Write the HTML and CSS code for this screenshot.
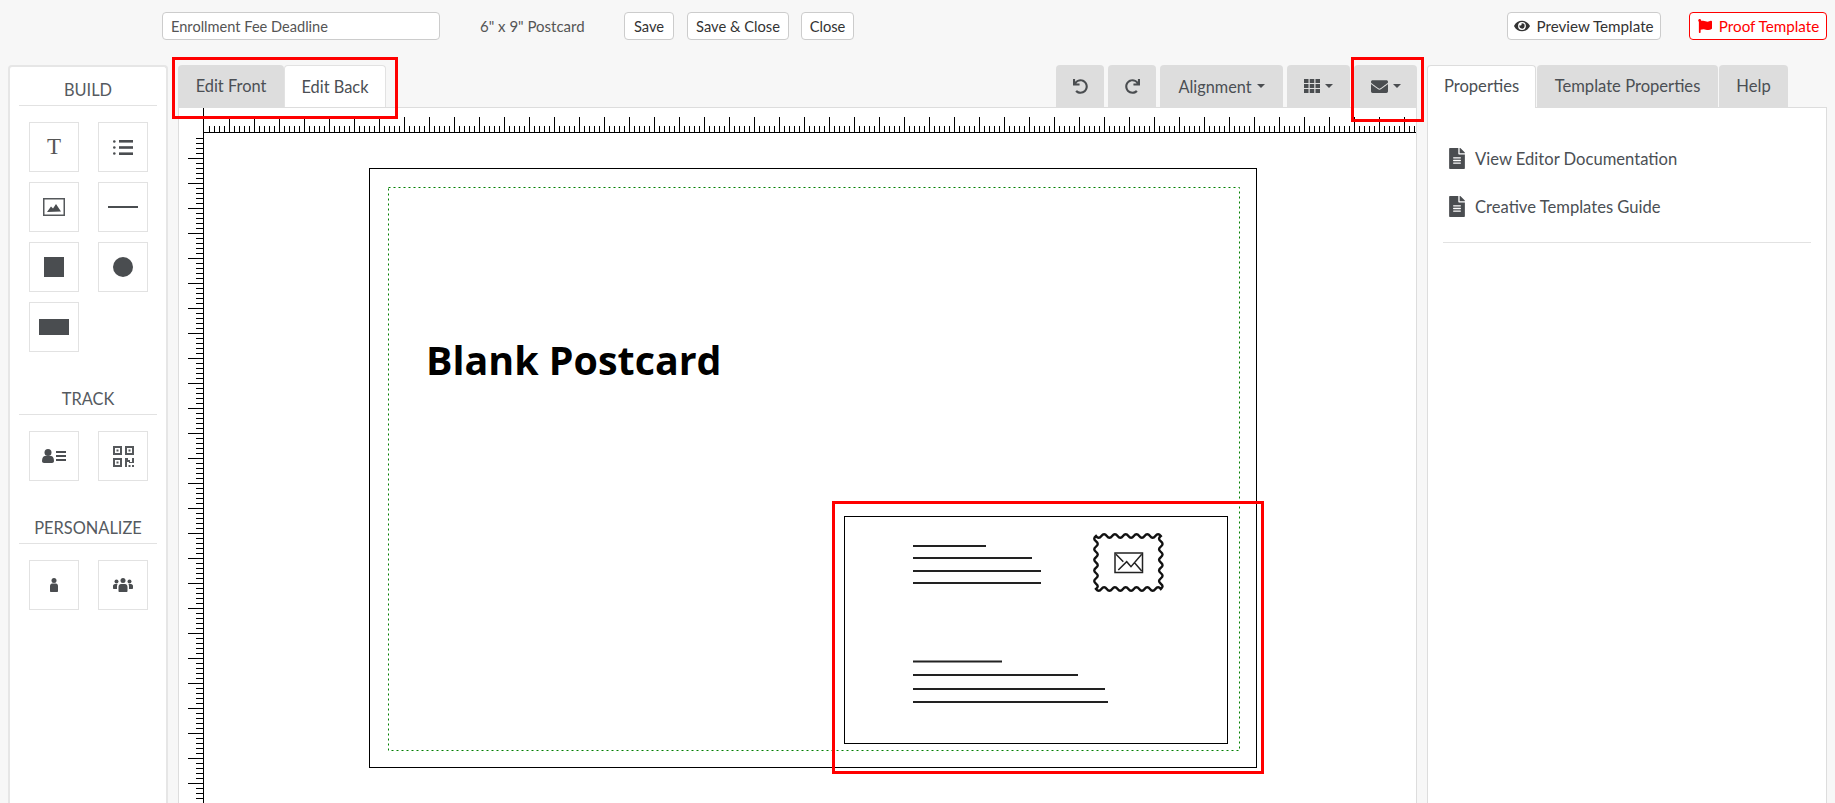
FILE: index.html
```html
<!DOCTYPE html>
<html lang="en">
<head>
    <meta charset="UTF-8">
    <title>Template Editor</title>
    <link rel="stylesheet" href="styles.css">
</head>
<body>
    <svg class="icon-defs" width="0" height="0">
        <symbol id="i-file" viewBox="0 0 384 512"><path d="M224 136V0H24C10.7 0 0 10.7 0 24v464c0 13.3 10.7 24 24 24h336c13.3 0 24-10.7 24-24V160H248c-13.2 0-24-10.8-24-24zm64 236c0 6.6-5.4 12-12 12H108c-6.6 0-12-5.4-12-12v-8c0-6.6 5.4-12 12-12h168c6.6 0 12 5.4 12 12v8zm0-64c0 6.6-5.4 12-12 12H108c-6.6 0-12-5.4-12-12v-8c0-6.6 5.4-12 12-12h168c6.6 0 12 5.4 12 12v8zm0-72v8c0 6.6-5.4 12-12 12H108c-6.6 0-12-5.4-12-12v-8c0-6.6 5.4-12 12-12h168c6.6 0 12 5.4 12 12zm96-114.1v6.1H256V0h6.1c6.4 0 12.5 2.5 17 7l97.9 98c4.5 4.5 7 10.6 7 16.9z"/></symbol>
        <symbol id="i-undo" viewBox="0 0 512 512"><path d="M212.333 224.333H12c-6.627 0-12-5.373-12-12V12C0 5.373 5.373 0 12 0h48c6.627 0 12 5.373 12 12v78.112C117.773 39.279 184.26 7.47 258.175 8.007c136.906.994 246.448 111.623 246.157 248.532C504.041 393.258 393.12 504 256.333 504c-64.089 0-122.496-24.313-166.51-64.215-5.099-4.622-5.334-12.554-.467-17.42l33.967-33.967c4.474-4.474 11.662-4.717 16.401-.525C170.76 415.336 211.58 432 256.333 432c97.268 0 176-78.716 176-176 0-97.267-78.716-176-176-176-58.496 0-110.28 28.476-142.274 72.333h98.274c6.627 0 12 5.373 12 12v48c0 6.627-5.373 12-12 12z"/></symbol>
    </svg>

    <header class="topbar">
        <input class="name-input" type="text" value="Enrollment Fee Deadline">
        <span class="format-label">6" x 9" Postcard</span>
        <a class="btn btn-save" href="#">Save</a>
        <a class="btn btn-save-close" href="#">Save &amp; Close</a>
        <a class="btn btn-close" href="#">Close</a>
        <a class="btn btn-preview" href="#">
            <svg class="btn-icon eye" viewBox="0 0 576 512"><path d="M572.52 241.4C518.29 135.59 410.93 64 288 64S57.68 135.64 3.48 241.41a32.35 32.35 0 0 0 0 29.19C57.71 376.41 165.07 448 288 448s230.32-71.64 284.52-177.41a32.35 32.35 0 0 0 0-29.19zM288 400a144 144 0 1 1 144-144 143.93 143.93 0 0 1-144 144zm0-240a95.31 95.31 0 0 0-25.31 3.79 47.85 47.85 0 0 1-66.9 66.9A95.78 95.78 0 1 0 288 160z"/></svg>
            Preview Template
        </a>
        <a class="btn btn-proof" href="#">
            <svg class="btn-icon flag" viewBox="0 0 512 512"><path d="M349.565 98.783C295.978 98.783 251.721 64 184.348 64c-24.955 0-47.309 4.384-68.045 12.013a55.947 55.947 0 0 0 3.586-23.562C118.117 24.015 94.806 1.206 66.338.048 34.345-1.254 8 24.296 8 56c0 19.026 9.497 35.825 24 45.945V488c0 13.255 10.745 24 24 24h16c13.255 0 24-10.745 24-24v-94.4c28.311-12.064 63.582-22.122 114.435-22.122 53.588 0 97.844 34.783 165.217 34.783 48.169 0 86.667-16.294 122.505-40.858C506.84 359.452 512 349.571 512 339.045v-243.1c0-23.393-24.269-38.87-45.485-29.016-34.338 15.948-76.454 31.854-116.95 31.854z"/></svg>
            Proof Template
        </a>
    </header>

    <main class="workspace">
        <aside class="tools">
            <h3>BUILD</h3>
            <div class="tool-grid">
                <div class="tool"><span class="tool-t">T</span></div>
                <div class="tool">
                    <svg width="20" height="15" viewBox="0 0 20 15"><circle cx="1.3" cy="1.5" r="1.3"/><circle cx="1.3" cy="7.5" r="1.3"/><circle cx="1.3" cy="13.5" r="1.3"/><rect x="6" y="0" width="14" height="2.6"/><rect x="6" y="6.2" width="14" height="2.6"/><rect x="6" y="12.4" width="14" height="2.6"/></svg>
                </div>
                <div class="tool">
                    <svg width="22" height="18" viewBox="0 0 22 18"><rect x="0.75" y="0.75" width="20.5" height="16.5" fill="none" stroke="#55585b" stroke-width="1.5"/><path d="M4 14 8 8.5l2 2 3-4.500 5 7.500z"/></svg>
                </div>
                <div class="tool"><span class="shape-line"></span></div>
                <div class="tool"><span class="shape-square"></span></div>
                <div class="tool"><span class="shape-circle"></span></div>
                <div class="tool"><span class="shape-rect"></span></div>
            </div>

            <h3>TRACK</h3>
            <div class="tool-grid">
                <div class="tool">
                    <svg width="24" height="14" viewBox="0 0 24 14"><circle cx="6" cy="3.500" r="3.500"/><path d="M0 12c0-3.500 1.500-5 3-5h6c1.500 0 3 1.500 3 5 0 1.200-.8 2-2 2H2c-1.200 0-2-.8-2-2z"/><rect x="14" y="2" width="10" height="2"/><rect x="14" y="6" width="10" height="2"/><rect x="14" y="10" width="10" height="2"/></svg>
                </div>
                <div class="tool">
                    <svg class="qr" width="21" height="21" viewBox="0 0 21 21"><path fill-rule="evenodd" d="M0 0h9v9H0zM2 2v5h5V2zM12 0h9v9h-9zM14 2v5h5V2zM0 12h9v9H0zM2 14v5h5v-5z"/><rect x="3.500" y="3.500" width="2" height="2"/><rect x="15.500" y="3.500" width="2" height="2"/><rect x="3.500" y="15.500" width="2" height="2"/><path d="M12 12h3v2h2v2h2v-4h2v5h-5v-1h-2v5h-2z"/><rect x="15.500" y="19" width="2" height="2"/><rect x="19" y="19" width="2" height="2"/></svg>
                </div>
            </div>

            <h3>PERSONALIZE</h3>
            <div class="tool-grid">
                <div class="tool">
                    <svg width="8" height="14" viewBox="0 0 8 14"><circle cx="4" cy="2.500" r="2.500"/><path d="M0 13v-5c0-1.500 1-2.500 2-2.500h4c1 0 2 1 2 2.500v5c0 .6-.4 1-1 1H1c-.6 0-1-.4-1-1z"/></svg>
                </div>
                <div class="tool">
                    <svg width="20" height="14" viewBox="0 0 20 14"><circle cx="10" cy="2.500" r="2.500"/><circle cx="3.500" cy="3.500" r="2"/><circle cx="16.500" cy="3.500" r="2"/><path d="M5.500 13v-4c0-1.800 1.200-3 2.500-3h4c1.300 0 2.500 1.200 2.500 3v4c0 .6-.4 1-1 1h-7c-.6 0-1-.4-1-1zM0 10V8c0-1 .8-2 2-2h2.500C4 7 4 8 4 9v2H1c-.6 0-1-.4-1-1zM20 10V8c0-1-.8-2-2-2h-2.500c.5 1 .5 2 .5 3v2h3c.6 0 1-.4 1-1z"/></svg>
                </div>
            </div>
        </aside>

        <section class="editor">
            <div class="editor-bar">
                <div class="side-tabs">
                    <a class="tab" href="#">Edit Front</a>
                    <a class="tab active" href="#">Edit Back</a>
                </div>
                <div class="actions">
                    <a class="action action-icon" href="#"><svg class="act-svg"><use href="#i-undo"/></svg></a>
                    <a class="action action-icon" href="#"><svg class="act-svg redo"><use href="#i-undo"/></svg></a>
                    <a class="action action-align" href="#">Alignment<span class="caret"></span></a>
                    <a class="action action-menu" href="#">
                        <svg width="16" height="14" viewBox="0 0 16 14"><rect width="4.500" height="4"/><rect x="5.750" width="4.500" height="4"/><rect x="11.500" width="4.500" height="4"/><rect y="5" width="4.500" height="4"/><rect x="5.750" y="5" width="4.500" height="4"/><rect x="11.500" y="5" width="4.500" height="4"/><rect y="10" width="4.500" height="4"/><rect x="5.750" y="10" width="4.500" height="4"/><rect x="11.500" y="10" width="4.500" height="4"/></svg><span class="caret"></span>
                    </a>
                    <a class="action action-menu" href="#">
                        <svg width="17" height="17" viewBox="0 0 512 512"><path d="M502.3 190.8c3.900-3.100 9.700-.2 9.700 4.700V400c0 26.500-21.500 48-48 48H48c-26.500 0-48-21.500-48-48V195.600c0-5 5.700-7.800 9.700-4.700 22.400 17.400 52.100 39.500 154.100 113.600 21.100 15.400 56.700 47.800 92.200 47.600 35.700.3 72-32.800 92.300-47.600 102-74.100 131.600-96.300 154-113.700zM256 320c23.200.4 56.600-29.200 73.400-41.400 132.700-96.300 142.800-104.700 173.400-128.700 5.800-4.500 9.200-11.500 9.200-18.900v-19c0-26.500-21.500-48-48-48H48C21.500 64 0 85.500 0 112v19c0 7.400 3.400 14.300 9.200 18.900 30.600 23.900 40.700 32.400 173.400 128.700 16.800 12.200 50.200 41.800 73.400 41.400z"/></svg><span class="caret"></span>
                    </a>
                </div>
            </div>

            <div class="canvas">
                <div class="ruler-top"></div>
                <div class="ruler-left"></div>
                <div class="postcard">
                    <svg class="postcard-art" width="888" height="600" viewBox="0 0 888 600">
                        <rect class="card-edge" x="0.500" y="0.500" width="887" height="599"/>
                        <rect class="safe-area" x="19.500" y="19.500" width="851" height="563"/>
                        <rect class="card-edge" x="475.500" y="348.500" width="383" height="227"/>
                        <g class="addr-lines">
                            <line x1="544" y1="378" x2="617" y2="378"/>
                            <line x1="544" y1="390" x2="663" y2="390"/>
                            <line x1="544" y1="403" x2="672" y2="403"/>
                            <line x1="544" y1="415" x2="672" y2="415"/>
                            <line x1="544" y1="493.500" x2="633" y2="493.500"/>
                            <line x1="544" y1="507" x2="709" y2="507"/>
                            <line x1="544" y1="521" x2="736" y2="521"/>
                            <line x1="544" y1="534" x2="739" y2="534"/>
                        </g>
                        <path class="stamp" d="M727 368q2.700 3.500 5.400 0t5.400 0t5.400 0t5.400 0t5.400 0t5.400 0t5.400 0t5.400 0t5.400 0t5.400 0t5.400 0t5.400 0q-3.500 2.650 0 5.300t0 5.300t0 5.300t0 5.300t0 5.300t0 5.300t0 5.300t0 5.300t0 5.300t0 5.300q-2.700-3.500-5.400 0t-5.400 0t-5.400 0t-5.400 0t-5.400 0t-5.400 0t-5.400 0t-5.400 0t-5.400 0t-5.400 0t-5.400 0t-5.400 0q3.500-2.650 0-5.300t0-5.300t0-5.300t0-5.300t0-5.300t0-5.300t0-5.300t0-5.300t0-5.300t0-5.300z"/>
                        <g class="stamp-mail">
                            <rect x="746" y="385" width="27.500" height="19.500"/>
                            <path d="M747 386.300 754.300 393.700M749.300 402 757.700 393.700 762 398.700 772.700 386.300M766 395.300 772.700 403"/>
                        </g>
                    </svg>
                    <h1 class="card-title">Blank Postcard</h1>
                </div>
            </div>
        </section>

        <aside class="props">
            <div class="props-tabs">
                <a class="prop-tab active" href="#">Properties</a>
                <a class="prop-tab wide" href="#">Template Properties</a>
                <a class="prop-tab help" href="#">Help</a>
            </div>
            <div class="props-body">
                <a class="doc-link" href="#"><svg class="doc-icon"><use href="#i-file"/></svg>View Editor Documentation</a>
                <a class="doc-link" href="#"><svg class="doc-icon"><use href="#i-file"/></svg>Creative Templates Guide</a>
                <hr class="props-rule">
            </div>
        </aside>
    </main>

    <!-- annotation boxes -->
    <div class="mark mark-tabs"></div>
    <div class="mark mark-mail"></div>
    <div class="mark mark-address"></div>
</body>
</html>
```

FILE: styles.css
```css
* {
    box-sizing: border-box;
}

html, body {
    margin: 0;
    height: 100%;
    overflow: hidden;
}

body {
    display: flex;
    flex-direction: column;
    position: relative;
    background: #f7f7f7;
    color: #4b4f54;
    font-family: 'Lato', sans-serif;
    font-size: 14px;
}

a {
    text-decoration: none;
    color: inherit;
}

.icon-defs {
    position: absolute;
}

/* Top bar */
.topbar {
    flex: none;
    display: flex;
    align-items: flex-start;
    height: 65px;
    padding: 12px 8px 0 162px;
}

.name-input {
    width: 278px;
    height: 28px;
    padding: 0 8px;
    border: 1px solid #ccc;
    border-radius: 4px;
    background: #fff;
    color: #555;
    font-family: inherit;
    font-size: 14.600px;
}

.format-label {
    margin-left: 40px;
    line-height: 28px;
    font-size: 15px;
    width: 144px;
    color: #555;
}

.btn {
    display: flex;
    align-items: center;
    justify-content: center;
    height: 28px;
    border: 1px solid #ccc;
    border-radius: 4px;
    background: #fff;
    color: #333;
    font-size: 14.700px;
}

.btn-save { width: 50px; }
.btn-save-close { width: 102px; margin-left: 13px; }
.btn-close { width: 53px; margin-left: 12px; }

.btn-preview {
    width: 154px;
    margin-left: auto;
    font-size: 15.200px;
}

.btn-proof {
    width: 138px;
    margin-left: 28px;
    border-color: #f00;
    color: #f00;
    font-size: 15.200px;
}

.btn-icon {
    width: 16px;
    height: 14px;
    margin-right: 6px;
    fill: currentColor;
}

.workspace {
    flex: 1;
    display: flex;
    min-height: 0;
}

/* Left tool panel */
.tools {
    flex: none;
    width: 160px;
    margin-left: 8px;
    padding: 12px 9px 0;
    border: 2px solid #e6e6e6;
    border-bottom: 0;
    border-radius: 4px 4px 0 0;
    background: #fff;
}

.tools h3 {
    margin: 36px 0 0;
    padding-bottom: 4px;
    border-bottom: 1px solid #e2e2e2;
    font-size: 16.400px;
    font-weight: 400;
    line-height: 22px;
    text-align: center;
    color: #555a60;
}

.tools h3:first-child {
    margin-top: 0;
}

.tool-grid {
    display: grid;
    grid-template-columns: 50px 50px;
    gap: 10px 19px;
    margin: 16px 0 0 10px;
}

.tool {
    display: flex;
    align-items: center;
    justify-content: center;
    height: 50px;
    border: 1px solid #e2e2e2;
    fill: #4a4d50;
}

.tool .qr {
    fill: #55585b;
}

.tool-t {
    font-family: 'Liberation Serif', serif;
    font-size: 23px;
    color: #555;
}

.shape-line {
    width: 30px;
    height: 2px;
    background: #4a4d50;
}

.shape-square {
    width: 20px;
    height: 20px;
    background: #4a4d50;
}

.shape-circle {
    width: 20px;
    height: 20px;
    border-radius: 50%;
    background: #4a4d50;
}

.shape-rect {
    width: 30px;
    height: 16px;
    background: #4a4d50;
}

/* Center editor */
.editor {
    flex: none;
    display: flex;
    flex-direction: column;
    width: 1239px;
    margin-left: 10px;
}

.editor-bar {
    flex: none;
    display: flex;
    justify-content: space-between;
    height: 42px;
}

.side-tabs,
.actions {
    display: flex;
}

.actions {
    gap: 4px;
}

.tab {
    width: 106px;
    line-height: 42px;
    border-radius: 4px 4px 0 0;
    background: #ddd;
    font-size: 16.400px;
    text-align: center;
}

.tab.active {
    width: 102px;
    border: 1px solid #e2e2e2;
    border-bottom: 0;
    background: #fff;
    line-height: 41px;
}

.action {
    display: flex;
    align-items: center;
    justify-content: center;
    border-radius: 4px 4px 0 0;
    background: #ddd;
    fill: #4a4d50;
    font-size: 16.300px;
}

.action-icon { width: 48px; }
.action-align { width: 123px; }
.action-menu { width: 63px; }

.act-svg {
    width: 15px;
    height: 15px;
}

.redo {
    transform: scaleX(-1);
}

.caret {
    width: 0;
    height: 0;
    margin-left: 5px;
    border-top: 4px solid #4a4d50;
    border-left: 4px solid transparent;
    border-right: 4px solid transparent;
}

.canvas {
    flex: 1;
    position: relative;
    overflow: hidden;
    border: 1px solid #ddd;
    border-bottom: 0;
    background: #fff;
}

/* Rulers: first minor tick is 5px off the zero line, majors every 25px */
.ruler-top {
    position: absolute;
    left: 24px;
    right: 0;
    top: 0;
    height: 25px;
    padding-left: 5px;
    border-left: 1px solid #000;
    border-bottom: 1px solid #000;
    background-image:
        linear-gradient(to right, #000 1px, transparent 1px),
        linear-gradient(to right, #000 1px, transparent 1px);
    background-size: 25px 15px, 5px 6px;
    background-position: 20px bottom, 0 bottom;
    background-repeat: repeat-x;
    background-origin: content-box;
    background-clip: content-box;
}

.ruler-left {
    position: absolute;
    left: 9px;
    top: 25px;
    bottom: 0;
    width: 16px;
    padding-top: 5px;
    border-right: 1px solid #000;
    background-image:
        linear-gradient(to bottom, #000 1px, transparent 1px),
        linear-gradient(to bottom, #000 1px, transparent 1px);
    background-size: 15px 25px, 7px 5px;
    background-position: 0 20px, 8px 0;
    background-repeat: repeat-y;
    background-origin: content-box;
    background-clip: content-box;
}

.postcard {
    position: absolute;
    left: 190px;
    top: 60px;
    width: 888px;
    height: 600px;
}

.postcard-art {
    display: block;
}

.card-edge {
    fill: none;
    stroke: #000;
}

.safe-area {
    fill: none;
    stroke: #008000;
    stroke-dasharray: 2 3;
}

.addr-lines line {
    stroke: #222;
    stroke-width: 2;
}

.stamp {
    fill: none;
    stroke: #111;
    stroke-width: 2.400;
}

.stamp-mail {
    fill: none;
    stroke: #222;
    stroke-width: 1.500;
}

.card-title {
    position: absolute;
    left: 57px;
    top: 166px;
    margin: 0;
    color: #000;
    font-family: 'Open Sans', sans-serif;
    font-size: 39.400px;
    font-weight: 700;
    line-height: 52px;
}

/* Right properties panel */
.props {
    flex: none;
    display: flex;
    flex-direction: column;
    width: 400px;
    margin-left: 10px;
}

.props-tabs {
    flex: none;
    display: flex;
    height: 42px;
    gap: 1px;
}

.prop-tab {
    width: 109px;
    border-radius: 4px 4px 0 0;
    background: #ddd;
    font-size: 16.600px;
    line-height: 42px;
    text-align: center;
}

.prop-tab.active {
    position: relative;
    z-index: 1;
    height: 43px;
    border: 1px solid #ddd;
    border-bottom: 0;
    background: #fff;
    line-height: 41px;
}

.prop-tab.wide { width: 181px; }
.prop-tab.help { width: 69px; }

.props-body {
    flex: 1;
    padding: 40px 15px 0;
    border: 1px solid #ddd;
    border-bottom: 0;
    background: #fff;
}

.doc-link {
    display: flex;
    align-items: center;
    height: 21px;
    margin: 0 0 27px 5px;
    font-size: 16.600px;
}

.doc-link:last-of-type {
    margin-bottom: 0;
}

.doc-icon {
    width: 18px;
    height: 21px;
    margin-right: 9px;
    fill: #4a4d50;
}

.props-rule {
    margin: 25px 0 0;
    border: 0;
    border-top: 1px solid #e2e2e2;
}

/* Red annotation boxes */
.mark {
    position: absolute;
    border: 3px solid #f00;
    pointer-events: none;
}

.mark-tabs {
    left: 172px;
    top: 57px;
    width: 226px;
    height: 62px;
}

.mark-mail {
    left: 1351px;
    top: 57px;
    width: 73px;
    height: 65px;
}

.mark-address {
    left: 832px;
    top: 501px;
    width: 432px;
    height: 273px;
}
```
